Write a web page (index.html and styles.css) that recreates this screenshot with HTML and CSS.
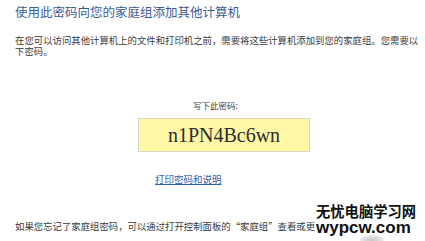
FILE: index.html
```html
<!DOCTYPE html>
<html lang="zh-CN">
<head>
<meta charset="utf-8">
<link rel="stylesheet" href="styles.css">
</head>
<body>
<div class="page">
  <h1 class="title">使用此密码向您的家庭组添加其他计算机</h1>
  <p class="desc">在您可以访问其他计算机上的文件和打印机之前，需要将这些计算机添加到您的家庭组。您需要以下密码。</p>
  <div class="prompt">写下此密码:</div>
  <div class="code">n1PN4Bc6wn</div>
  <a class="link" href="#">打印密码和说明</a>
  <p class="note">如果您忘记了家庭组密码，可以通过打开控制面板的“家庭组”查看或更改</p>
  <div class="watermark">
    <div class="wm-cn">无忧电脑学习网</div>
    <div class="wm-en">wypcw.com</div>
  </div>
  <div class="blob"></div>
</div>
</body>
</html>
```
FILE: styles.css
```css
html, body {
  margin: 0;
  padding: 0;
  background: #ffffff;
}
.page {
  position: relative;
  width: 425px;
  height: 241px;
  overflow: hidden;
  padding-left: 15px;
  box-sizing: border-box;
  font-family: "Noto Sans CJK SC", "Noto Sans", sans-serif;
  color: #3a3a3a;
}
.title {
  margin: 4px 0 0 0;
  font-size: 12.5px;
  line-height: 16px;
  font-weight: normal;
  color: #3b5b94;
}
.desc {
  margin: 14.5px 0 0 0;
  width: 410px;
  font-size: 9.4px;
  line-height: 11px;
}
.prompt {
  margin: 43px 0 0 178px;
  font-size: 8.5px;
  line-height: 11px;
  color: #444;
}
.code {
  margin: 7.5px 0 0 123px;
  width: 172px;
  height: 34px;
  box-sizing: border-box;
  border: 1px solid #d8d6c0;
  background: #fff7a6;
  font-family: "Liberation Serif", serif;
  font-size: 20px;
  line-height: 32px;
  text-align: center;
  color: #2e2e2e;
}
.link {
  display: block;
  width: max-content;
  margin: 22px 0 0 140px;
  font-size: 9.5px;
  line-height: 11px;
  color: #2f62b0;
  text-decoration: underline;
}
.note {
  margin: 35.5px 0 0 0;
  font-size: 9.4px;
  line-height: 11px;
  white-space: nowrap;
}
.watermark {
  position: absolute;
  left: 315px;
  top: 202px;
  color: #111;
  font-weight: bold;
}
.wm-cn {
  font-family: "Noto Sans CJK SC", sans-serif;
  font-size: 14.3px;
  line-height: 18px;
  padding-left: 1px;
}
.wm-en {
  font-family: "Liberation Sans", Arial, sans-serif;
  font-size: 17px;
  line-height: 16px;
  background: #ffffff;
  padding-left: 1px;
}
.blob {
  position: absolute;
  left: 360px;
  top: 235px;
  width: 24px;
  height: 10px;
  border-radius: 50%;
  background: radial-gradient(ellipse at center, #c8c8c8 0%, #e6e6e6 60%, rgba(255,255,255,0) 100%);
}
```
